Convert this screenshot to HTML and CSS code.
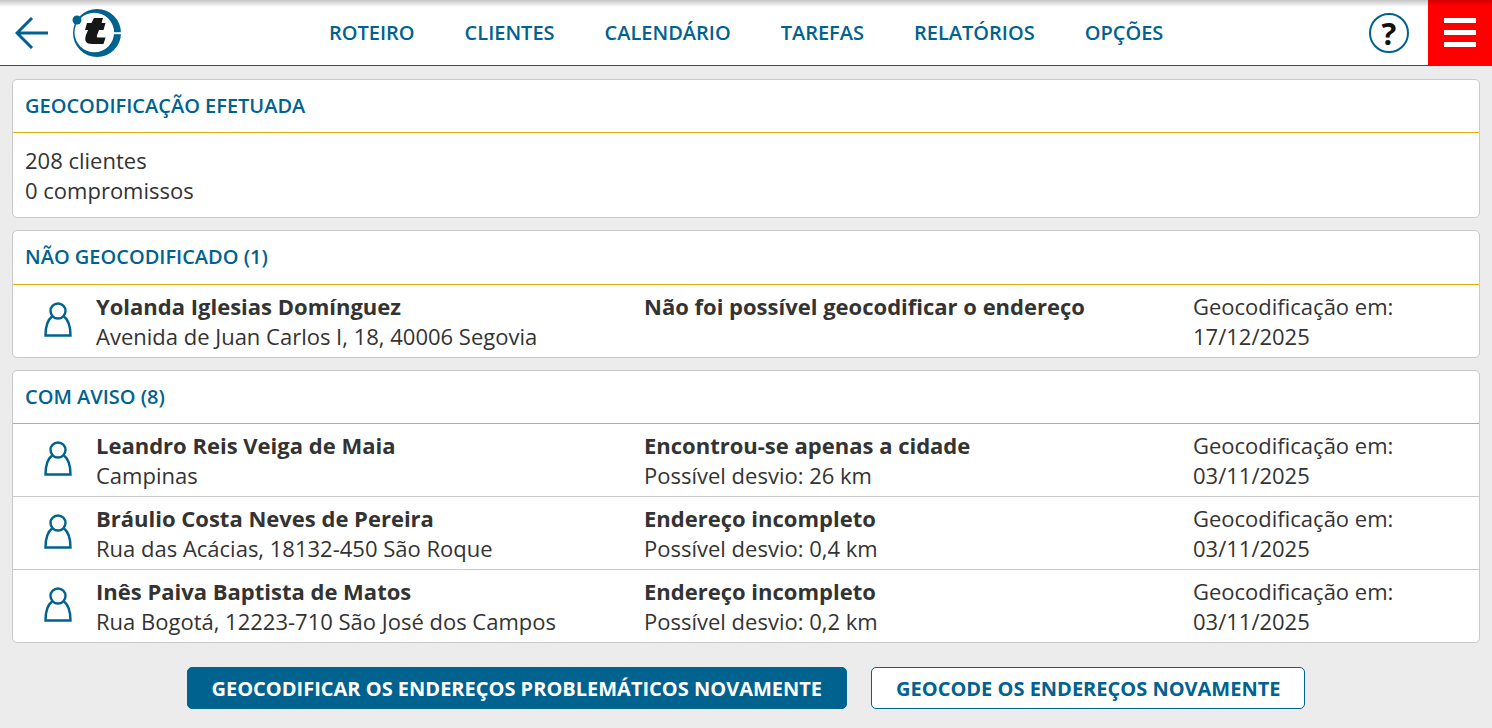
FILE: index.html
```html
<!DOCTYPE html>
<html lang="pt-br">

<head>
    <meta charset="UTF-8">
    <meta name="viewport" content="width=device-width, initial-scale=1.0">
    <title>Geocodificação</title>
    <link rel="stylesheet" href="styles.css">
</head>

<body>
    <!-- Navegação -->
    <header class="topbar">
        <a class="back" href="#" aria-label="Voltar">
            <svg width="34" height="32" viewBox="0 0 34 32" fill="none" stroke="#00628f" stroke-width="3">
                <path d="M33 16H2M17 1L2 16l15 15" />
            </svg>
        </a>
        <a class="logo" href="#" aria-label="Logo">
            <svg width="52" height="52" viewBox="0 0 52 52">
                <path fill-rule="evenodd" d="M2 26a24 24 0 1 0 48 0a24 24 0 1 0-48 0ZM3.500 25.500a19.800 19.800 0 1 1 39.600 0a19.800 19.800 0 1 1-39.600 0Z" fill="#00628f" />
                <rect x="41" y="25.200" width="11" height="2" fill="#fff" />
                <circle cx="6" cy="13" r="4.500" fill="#00628f" />
                <path d="M23 11H32L30.500 16H34.500L32.500 23H28L26 28.500C25.500 30 26 30.500 27.500 30.500H34.500L32.500 37H21C15 37 13 34 15 28L17 23H14L16 16H20.500Z" fill="#161616" />
            </svg>
        </a>
        <nav class="nav-links">
            <a href="#">ROTEIRO</a>
            <a href="#">CLIENTES</a>
            <a href="#">CALENDÁRIO</a>
            <a href="#">TAREFAS</a>
            <a href="#">RELATÓRIOS</a>
            <a href="#">OPÇÕES</a>
        </nav>
        <a class="help" href="#">?</a>
        <button class="menu" type="button" aria-label="Menu">
            <span></span>
            <span></span>
            <span></span>
        </button>
    </header>

    <!-- Conteúdo -->
    <main>
        <section class="card">
            <h2 class="card-title">GEOCODIFICAÇÃO EFETUADA</h2>
            <div class="summary">
                <p>208 clientes</p>
                <p>0 compromissos</p>
            </div>
        </section>

        <section class="card">
            <h2 class="card-title tall">NÃO GEOCODIFICADO (1)</h2>
            <div class="row">
                <svg class="person" viewBox="0 0 28 35" fill="none" stroke="#00628f" stroke-width="2.400">
                    <circle cx="14" cy="9" r="7.500" />
                    <path d="M8 14.500C3.500 18 1.500 24 1.500 33.500h25C26.500 24 24.500 18 20 14.500" />
                </svg>
                <div class="col"><strong>Yolanda Iglesias Domínguez</strong><span>Avenida de Juan Carlos I, 18, 40006 Segovia</span></div>
                <div class="col"><strong>Não foi possível geocodificar o endereço</strong></div>
                <div class="col"><span>Geocodificação em:</span><span>17/12/2025</span></div>
            </div>
        </section>

        <section class="card">
            <h2 class="card-title">COM AVISO (8)</h2>
            <div class="row">
                <svg class="person" viewBox="0 0 28 35" fill="none" stroke="#00628f" stroke-width="2.400">
                    <circle cx="14" cy="9" r="7.500" />
                    <path d="M8 14.500C3.500 18 1.500 24 1.500 33.500h25C26.500 24 24.500 18 20 14.500" />
                </svg>
                <div class="col"><strong>Leandro Reis Veiga de Maia</strong><span>Campinas</span></div>
                <div class="col"><strong>Encontrou-se apenas a cidade</strong><span>Possível desvio: 26 km</span></div>
                <div class="col"><span>Geocodificação em:</span><span>03/11/2025</span></div>
            </div>
            <div class="row">
                <svg class="person" viewBox="0 0 28 35" fill="none" stroke="#00628f" stroke-width="2.400">
                    <circle cx="14" cy="9" r="7.500" />
                    <path d="M8 14.500C3.500 18 1.500 24 1.500 33.500h25C26.500 24 24.500 18 20 14.500" />
                </svg>
                <div class="col"><strong>Bráulio Costa Neves de Pereira</strong><span>Rua das Acácias, 18132-450 São Roque</span></div>
                <div class="col"><strong>Endereço incompleto</strong><span>Possível desvio: 0,4 km</span></div>
                <div class="col"><span>Geocodificação em:</span><span>03/11/2025</span></div>
            </div>
            <div class="row">
                <svg class="person" viewBox="0 0 28 35" fill="none" stroke="#00628f" stroke-width="2.400">
                    <circle cx="14" cy="9" r="7.500" />
                    <path d="M8 14.500C3.500 18 1.500 24 1.500 33.500h25C26.500 24 24.500 18 20 14.500" />
                </svg>
                <div class="col"><strong>Inês Paiva Baptista de Matos</strong><span>Rua Bogotá, 12223-710 São José dos Campos</span></div>
                <div class="col"><strong>Endereço incompleto</strong><span>Possível desvio: 0,2 km</span></div>
                <div class="col"><span>Geocodificação em:</span><span>03/11/2025</span></div>
            </div>
        </section>

        <div class="actions">
            <button class="btn btn-primary" type="button">GEOCODIFICAR OS ENDEREÇOS PROBLEMÁTICOS NOVAMENTE</button>
            <button class="btn btn-outline" type="button">GEOCODE OS ENDEREÇOS NOVAMENTE</button>
        </div>
    </main>
</body>

</html>
```

FILE: styles.css
```css
/* Reset básico */
* {
    margin: 0;
    padding: 0;
    box-sizing: border-box;
    font-family: 'Open Sans', Arial, sans-serif;
}

:root {
    --azul: #00628f;
    --texto: #333;
    --fundo: #ececec;
    --borda: #c8cacb;
    --ouro: #e6b012;
}

body {
    background-color: var(--fundo);
    color: var(--texto);
    font-size: 22px;
    line-height: 30px;
    height: 728px;
    overflow: hidden;
}

/* Cabeçalho */
.topbar {
    display: flex;
    align-items: center;
    height: 66px;
    background: linear-gradient(#c4c4c4, #fff 7px);
    border-bottom: 1px solid var(--azul);
}

.back {
    display: flex;
    margin-left: 15px;
}

.logo {
    display: flex;
    margin-left: 22px;
}

.nav-links {
    display: flex;
    gap: 50px;
    margin-left: 206px;
    font-size: 20px;
}

.nav-links a {
    color: var(--azul);
    text-decoration: none;
    font-weight: 600;
}

.help {
    width: 40px;
    height: 40px;
    margin-left: auto;
    margin-right: 19px;
    border: 2px solid var(--azul);
    border-radius: 50%;
    color: #111;
    font-size: 31px;
    font-weight: 700;
    line-height: 36px;
    text-align: center;
    text-decoration: none;
}

.menu {
    width: 64px;
    height: 65px;
    border: none;
    background: linear-gradient(#d40000, #f00 6px);
    display: flex;
    flex-direction: column;
    justify-content: center;
    align-items: center;
    gap: 7px;
}

.menu span {
    display: block;
    width: 32px;
    height: 5px;
    background-color: #fff;
}

/* Conteúdo Principal */
main {
    padding: 13px 12px 0;
}

.card {
    background-color: #fff;
    border: 1px solid var(--borda);
    border-radius: 5px;
    margin-bottom: 12px;
}

.card-title {
    color: var(--azul);
    font-size: 20px;
    font-weight: 600;
    line-height: 30px;
    padding: 11px 12px;
    height: 53px;
    border-bottom: 1px solid var(--ouro);
}

.card-title.tall {
    height: 54px;
}

.summary {
    padding: 12px 12px 12px;
}

.row {
    display: grid;
    grid-template-columns: 83px 548px 549px 1fr;
    height: 73px;
    padding-top: 6px;
    border-bottom: 1px solid var(--borda);
}

.row:last-child {
    height: 72px;
    border-bottom: none;
}

.person {
    width: 28px;
    height: 35px;
    margin: 11px 0 0 31px;
}

.col {
    display: flex;
    flex-direction: column;
    align-items: flex-start;
}

.col strong {
    font-weight: 700;
}

/* Botões */
.actions {
    display: flex;
    justify-content: center;
    gap: 24px;
    margin-top: 24px;
}

.btn {
    height: 42px;
    border-radius: 5px;
    font-size: 20px;
    font-weight: 700;
    padding: 0 24px;
    color: var(--azul);
    background-color: #fff;
    border: 1px solid var(--azul);
}

.btn-primary {
    background-color: var(--azul);
    color: #fff;
}
```
